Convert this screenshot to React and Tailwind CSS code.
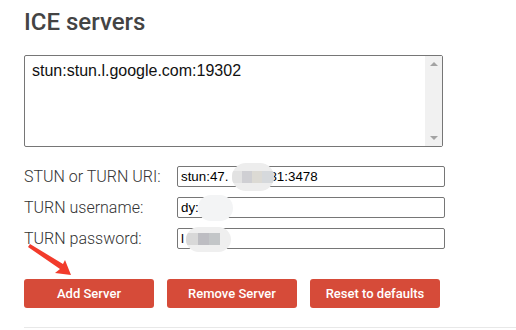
import React from "react";

const rows = [
  { label: "STUN or TURN URI:", value: "stun:47.", tail: "81:3478", blur: "uri" },
  { label: "TURN username:", value: "dy:", tail: "", blur: "user" },
  { label: "TURN password:", value: "l", tail: "l", blur: "pass" },
];

function Blur({ kind }) {
  // mosaic blobs that hide the private values
  if (kind === "uri") {
    return (
      <div className="absolute left-[54px] top-[-4px] flex h-[28px] w-[42px] overflow-hidden rounded-full bg-[#ededed]">
        <div className="mt-[8px] h-[12px] w-[10px] bg-[#e2e2e2]" />
        <div className="mt-[8px] h-[12px] w-[10px] bg-[#cfcfd3]" />
        <div className="mt-[8px] h-[12px] w-[10px] bg-[#dcdad4]" />
        <div className="mt-[8px] h-[12px] w-[12px] bg-[#d6d9dc]" />
      </div>
    );
  }
  if (kind === "user") {
    return (
      <div className="absolute left-[20px] top-[-3px] h-[26px] w-[35px] rounded-full bg-[#f3f4f5]" />
    );
  }
  return (
    <div className="absolute left-[8px] top-[-2px] flex h-[25px] w-[45px] overflow-hidden rounded-full bg-[#efefef]">
      <div className="mt-[6px] h-[12px] w-[12px] bg-[#d8d8d8]" />
      <div className="mt-[6px] h-[12px] w-[11px] bg-[#bdbdc2]" />
      <div className="mt-[6px] h-[12px] w-[11px] bg-[#c3c6c8]" />
    </div>
  );
}

export default function App() {
  return (
    <div className="relative h-[330px] w-[516px] overflow-hidden bg-white font-['Roboto',sans-serif]">
      <div className="pl-[24px] pt-[7px]">
        <h2 className="text-[24px] font-medium leading-[30px] text-[#444]">ICE servers</h2>

        {/* servers list */}
        <div className="mt-[18px] flex h-[92px] w-[419px] rounded-[2px] border border-[#767676]">
          <div className="flex-1 px-[7px] pt-[5px] font-['Liberation_Sans',Arial,sans-serif] text-[16px] leading-[20px] text-[#111]">
            stun:stun.l.google.com:19302
          </div>
          <div className="flex w-[17px] flex-col items-center justify-between bg-[#f1f1f1] py-[6px]">
            <div className="h-0 w-0 border-x-[4px] border-b-[4px] border-x-transparent border-b-[#a3a3a3]" />
            <div className="h-0 w-0 border-x-[4px] border-t-[4px] border-x-transparent border-t-[#a3a3a3]" />
          </div>
        </div>

        <div className="mt-[19px] flex flex-col gap-[10px]">
          {rows.map((r) => (
            <div key={r.label} className="flex h-[21px] items-center">
              <div className="w-[153px] text-[16px] font-light text-[#333]">{r.label}</div>
              <div className="relative h-[21px] w-[268px] rounded-[2px] border border-[#767676] px-[3px] font-['Liberation_Sans',Arial,sans-serif] text-[13.33px] leading-[19px] text-black">
                <span>{r.value}</span>
                {r.tail && (
                  <span className={r.blur === "uri" ? "ml-[41px]" : "ml-[31px]"}>{r.tail}</span>
                )}
                <Blur kind={r.blur} />
              </div>
            </div>
          ))}
        </div>

        <div className="mt-[30px] flex gap-[13px]">
          {["Add Server", "Remove Server", "Reset to defaults"].map((t) => (
            <button
              key={t}
              className="h-[29px] w-[130px] rounded-[3px] bg-[#d64b39] text-[13px] font-medium text-white"
            >
              {t}
            </button>
          ))}
        </div>

        <div className="mt-[19px] h-px bg-[#e8e8e8]" />
      </div>

      {/* red pointer arrow */}
      <svg className="absolute left-0 top-0" width="516" height="330">
        <polygon points="28,247 30,244 63,264 65,260 71,275 55,273 60,269" fill="#f23b2b" />
      </svg>
    </div>
  );
}
